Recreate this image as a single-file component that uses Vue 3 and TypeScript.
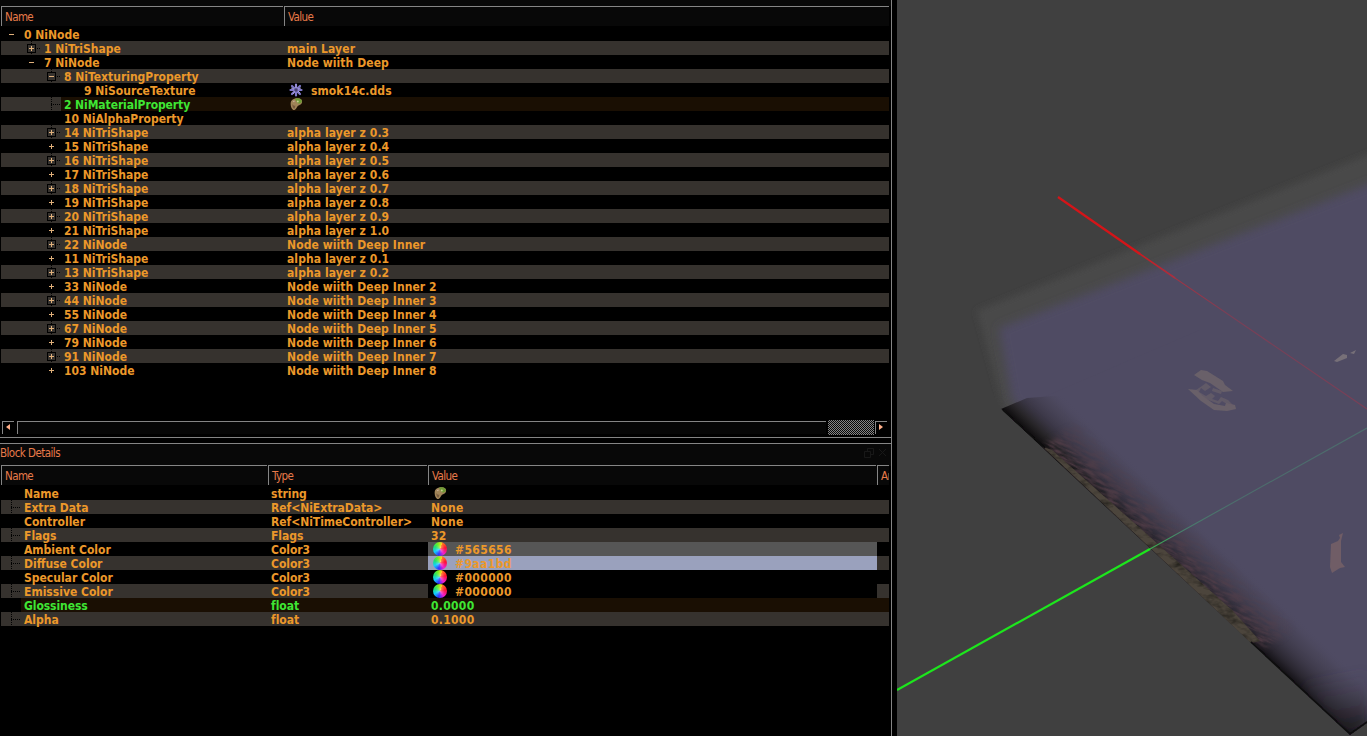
<script setup lang="ts">
interface Block {
  depth: number
  label: string
  value?: string
  toggle?: 'plus' | 'minus'
  icon?: 'flower' | 'palette'
  active?: boolean
}

interface Detail {
  name: string
  type: string
  value: string
  color?: string
  icon?: 'palette'
  active?: boolean
}

const shape = (label: string, value: string): Block => ({ depth: 2, label, value, toggle: 'plus' })

const blocks: Block[] = [
  { depth: 0, label: '0 NiNode', toggle: 'minus' },
  { depth: 1, label: '1 NiTriShape', value: 'main Layer', toggle: 'plus' },
  { depth: 1, label: '7 NiNode', value: 'Node wiith Deep', toggle: 'minus' },
  { depth: 2, label: '8 NiTexturingProperty', toggle: 'minus' },
  { depth: 3, label: '9 NiSourceTexture', value: 'smok14c.dds', icon: 'flower' },
  { depth: 2, label: '2 NiMaterialProperty', icon: 'palette', active: true },
  { depth: 2, label: '10 NiAlphaProperty' },
  shape('14 NiTriShape', 'alpha layer z 0.3'),
  shape('15 NiTriShape', 'alpha layer z 0.4'),
  shape('16 NiTriShape', 'alpha layer z 0.5'),
  shape('17 NiTriShape', 'alpha layer z 0.6'),
  shape('18 NiTriShape', 'alpha layer z 0.7'),
  shape('19 NiTriShape', 'alpha layer z 0.8'),
  shape('20 NiTriShape', 'alpha layer z 0.9'),
  shape('21 NiTriShape', 'alpha layer z 1.0'),
  shape('22 NiNode', 'Node wiith Deep Inner'),
  shape('11 NiTriShape', 'alpha layer z 0.1'),
  shape('13 NiTriShape', 'alpha layer z 0.2'),
  shape('33 NiNode', 'Node wiith Deep Inner 2'),
  shape('44 NiNode', 'Node wiith Deep Inner 3'),
  shape('55 NiNode', 'Node wiith Deep Inner 4'),
  shape('67 NiNode', 'Node wiith Deep Inner 5'),
  shape('79 NiNode', 'Node wiith Deep Inner 6'),
  shape('91 NiNode', 'Node wiith Deep Inner 7'),
  shape('103 NiNode', 'Node wiith Deep Inner 8'),
]

const details: Detail[] = [
  { name: 'Name', type: 'string', value: '', icon: 'palette' },
  { name: 'Extra Data', type: 'Ref<NiExtraData>', value: 'None' },
  { name: 'Controller', type: 'Ref<NiTimeController>', value: 'None' },
  { name: 'Flags', type: 'Flags', value: '32' },
  { name: 'Ambient Color', type: 'Color3', value: '#565656', color: '#565656' },
  { name: 'Diffuse Color', type: 'Color3', value: '#9aa1bd', color: '#9aa1bd' },
  { name: 'Specular Color', type: 'Color3', value: '#000000', color: '#000000' },
  { name: 'Emissive Color', type: 'Color3', value: '#000000', color: '#000000' },
  { name: 'Glossiness', type: 'float', value: '0.0000', active: true },
  { name: 'Alpha', type: 'float', value: '0.1000' },
]
</script>

<template>
  <div class="app">
    <svg class="defs" width="0" height="0">
      <symbol id="flower" viewBox="0 0 14 14">
        <g stroke="#8078c8" stroke-width="2.2" stroke-linecap="round">
          <path d="M7 1.5V12.5M1.5 7H12.5M3 3L11 11M11 3L3 11" />
        </g>
        <g stroke="#b4b0ea" stroke-width=".8"><path d="M7 1V5M2 5L5 6M4 11L6 8M11 10L9 8M12 5L9 6" /></g>
        <circle cx="7" cy="7" r="1.7" fill="#4a4470" />
      </symbol>
      <symbol id="palette" viewBox="0 0 14 14">
        <path d="M1.800 5.200C2.500 2.400 6 1 9 1.200C12 1.300 13.600 3.200 13 5.500C12.400 8 9.700 8 8.600 9.200C7.600 10.400 7.300 12.400 5.500 13C3 13.600 1.100 8.600 1.800 5.200Z" fill="#a08458" />
        <path d="M6 1.800C10 .6 13.200 2 12.800 4.800C12 7.200 9 6.800 7.800 5.300Z" fill="#6f9a35" />
        <circle cx="8.800" cy="4.600" r="1" fill="#c8cc90" />
        <path d="M3.300 7C4.200 8.600 5 9 6.500 8.500L5.600 11.500C4.500 12 3.300 9.700 3.300 7Z" fill="#775a3d" />
        <path d="M4 4.600L5.700 4" stroke="#c5ad93" stroke-width="1.200" />
      </symbol>
    </svg>

    <div class="side">
      <section class="list">
        <div class="head">
          <div class="cell h-block">Name</div>
          <div class="cell h-rest">Value</div>
        </div>
        <div v-for="b in blocks" :key="b.label" class="row" :class="{ active: b.active }">
          <div class="tree" :class="'d' + b.depth">
            <span class="branch" :class="b.toggle || 'leaf'"><i v-if="b.toggle" /></span>
            <span class="label">{{ b.label }}</span>
          </div>
          <div class="value">
            <svg v-if="b.icon" class="icon" width="14" height="14"><use :href="'#' + b.icon" /></svg>
            <span v-if="b.value" :class="{ gap: b.icon }">{{ b.value }}</span>
          </div>
        </div>
      </section>
      <div class="scroll">
        <div class="btn left"><svg width="4" height="6"><path d="M4 0V6L0 3Z" fill="#ffae88" /></svg></div>
        <div class="track" />
        <div class="thumb" />
        <div class="btn right"><svg width="4" height="6"><path d="M0 0V6L4 3Z" fill="#ffae88" /></svg></div>
      </div>
      <div class="splitter" />
      <div class="title">
        <span>Block Details</span>
        <svg width="24" height="10" fill="none" stroke="#181818">
          <path d="M3.5 3V.5H9.500V6.500H7M.5 3.500H6.500V9.500H.5ZM15 1L22 8M22 1L15 8" />
        </svg>
      </div>
      <section class="list details">
        <div class="head">
          <div class="cell h-name">Name</div>
          <div class="cell h-type">Type</div>
          <div class="cell h-value">Value</div>
          <div class="cell h-rest">Ar</div>
        </div>
        <div v-for="d in details" :key="d.name" class="row" :class="{ active: d.active }">
          <div class="tree d0">
            <span class="branch leaf" />
            <span class="label">{{ d.name }}</span>
          </div>
          <div class="type">{{ d.type }}</div>
          <div class="value" :style="{ background: d.color }">
            <svg v-if="d.icon" class="icon" width="14" height="14"><use :href="'#' + d.icon" /></svg>
            <span v-if="d.color" class="wheel" />
            <span :class="{ gap: d.color }">{{ d.value }}</span>
          </div>
        </div>
      </section>
    </div>

    <svg class="scene" width="470" height="736" viewBox="897 0 470 736">
      <defs>
        <filter id="soft" x="-20%" y="-20%" width="140%" height="140%"><feGaussianBlur stdDeviation="3" /></filter>
        <filter id="softer" x="-20%" y="-20%" width="140%" height="140%"><feGaussianBlur stdDeviation="5" /></filter>
        <filter id="fine" x="-20%" y="-20%" width="140%" height="140%"><feGaussianBlur stdDeviation=".6" /></filter>
        <filter id="grain" x="0" y="0" width="100%" height="100%" color-interpolation-filters="sRGB">
          <feTurbulence type="fractalNoise" baseFrequency=".07 .35" numOctaves="3" seed="4" />
          <feColorMatrix values="0 0 0 0 .34  0 0 0 0 .25  0 0 0 0 .29  2.4 0 0 0 -.75" />
        </filter>
        <filter id="rock" x="0" y="0" width="100%" height="100%" color-interpolation-filters="sRGB">
          <feTurbulence type="fractalNoise" baseFrequency=".08 .16" numOctaves="3" seed="9" />
          <feColorMatrix values="0 0 0 0 .15  0 0 0 0 .14  0 0 0 0 .12  2.2 0 0 0 -.95" />
          <feComposite in2="SourceGraphic" operator="in" result="spots" />
          <feMerge><feMergeNode in="SourceGraphic" /><feMergeNode in="spots" /></feMerge>
          <feGaussianBlur stdDeviation=".5" />
        </filter>
        <linearGradient id="shade" gradientUnits="userSpaceOnUse" x1="1175" y1="571" x2="1210" y2="534">
          <stop offset="0" stop-color="#0b090b" stop-opacity=".92" />
          <stop offset=".2" stop-color="#191619" stop-opacity=".68" />
          <stop offset=".45" stop-color="#28242b" stop-opacity=".46" />
          <stop offset=".75" stop-color="#3a3641" stop-opacity=".24" />
          <stop offset="1" stop-color="#4f4b63" stop-opacity="0" />
        </linearGradient>
        <linearGradient id="tip" gradientUnits="userSpaceOnUse" x1="1350" y1="735" x2="1338" y2="672">
          <stop offset="0" stop-color="#151215" stop-opacity=".8" />
          <stop offset=".4" stop-color="#2b2830" stop-opacity=".45" />
          <stop offset="1" stop-color="#4f4b63" stop-opacity="0" />
        </linearGradient>
        <linearGradient id="maskfade" gradientUnits="userSpaceOnUse" x1="1175" y1="571" x2="1205" y2="539">
          <stop offset="0" stop-color="#ddd" /><stop offset=".5" stop-color="#999" /><stop offset="1" stop-color="#000" />
        </linearGradient>
        <mask id="fur" maskUnits="userSpaceOnUse" x="897" y="0" width="470" height="736">
          <path d="M1042 447L1080 420L1300 625L1262 650Z" fill="url(#maskfade)" filter="url(#soft)" />
        </mask>
        <linearGradient id="redfade" gradientUnits="userSpaceOnUse" x1="1130" y1="247" x2="1230" y2="315">
          <stop offset="0" stop-color="#d51418" /><stop offset=".45" stop-color="#a83040" /><stop offset="1" stop-color="#793f56" />
        </linearGradient>
        <linearGradient id="greenfade" gradientUnits="userSpaceOnUse" x1="1150" y1="549" x2="1240" y2="499">
          <stop offset="0" stop-color="#39b050" /><stop offset=".35" stop-color="#487e6c" /><stop offset="1" stop-color="#4c6c6c" />
        </linearGradient>
        <clipPath id="body"><path d="M930 280L1380 90V714L1350 735L1001 409Z" /></clipPath>
      </defs>
      <rect x="897" width="470" height="736" fill="#404040" />
      <g clip-path="url(#body)">
        <path d="M977 311L1400 142V800L1350 735L1004 409Z" fill="#494948" filter="url(#soft)" />
        <path d="M999 328L1400 172V760H1350L1040 425L1012 400Z" fill="#4f4b63" filter="url(#softer)" />
        <path d="M1030 403L1200 330H1367V716L1350 735Z" fill="#4f4b63" />
        <path d="M1001 409L1027 398L1066 395L1400 706V740H1350Z" fill="url(#shade)" />
        <g mask="url(#fur)">
          <rect x="900" y="300" width="600" height="500" filter="url(#grain)" transform="rotate(25 1160 550)" />
        </g>
        <path d="M1300 688L1330 660H1367V725L1350 735Z" fill="url(#tip)" filter="url(#softer)" />
      </g>
      <path d="M1043 447L1052 450L1150 537L1233 611L1260 641L1251 643Z" fill="#4c453c" filter="url(#rock)" />
      <path d="M1003 410L1045 448M1251 642L1350 734L1367 722" stroke="#0c0b0c" stroke-width="1.600" fill="none" filter="url(#fine)" />
      <g fill="#696069" filter="url(#fine)">
        <path d="M1194 375L1201 370L1207 371L1223 381L1225 385L1233 391L1223 392L1210 383L1202 380Z" />
        <path d="M1188 389L1197 390L1203 396L1214 404L1225 406L1226 403L1235 405L1236 409L1227 411L1214 410L1201 401Z" />
        <path d="M1206 383L1211 387L1205 391L1201 388L1199 392L1206 396L1211 393L1215 396L1212 399L1218 401L1221 397L1228 400L1234 406L1230 406L1222 401L1219 404L1206 399L1196 390L1202 386ZM1213 388L1222 391L1221 394L1212 391Z" opacity=".7" />
      </g>
      <path d="M1334 361L1343 354L1347 355V358L1337 362ZM1350 353L1356 350L1354 354Z" fill="#777078" filter="url(#fine)" />
      <path d="M1331 544L1338 541L1340 538L1339 535L1343 533L1342 537L1341 541V562L1345 567L1340 568L1332 573L1330 567Z" fill="#6f5d66" filter="url(#fine)" />
      <g fill="none">
        <path d="M1058 197L1140 254" stroke="#d51418" stroke-width="2.200" />
        <path d="M1138 252.600L1175 278" stroke="url(#redfade)" stroke-width="1.600" />
        <path d="M1174 277.400L1367 409" stroke="url(#redfade)" stroke-width="1.100" />
        <path d="M897 690L1150 549" stroke="#1de61d" stroke-width="2.200" />
        <path d="M1150 549L1367 428" stroke="url(#greenfade)" stroke-width="1.100" />
      </g>
    </svg>
  </div>
</template>

<style>
body {
  background: #000;
  overflow: hidden;
}
</style>

<style scoped>
.app {
  display: flex;
  width: 1367px;
  height: 736px;
  overflow: hidden;
  background: #000;
  font: bold 12px/16px 'DejaVu Sans Condensed', 'DejaVu Sans', sans-serif;
  font-stretch: condensed;
  color: #ec982a;
  white-space: nowrap;
}
.defs {
  position: absolute;
}
.side {
  box-sizing: border-box;
  width: 892px;
  height: 736px;
  margin-right: 5px;
  border-right: 1px solid #858585;
  display: flex;
  flex-direction: column;
  flex-shrink: 0;
}
.scene {
  flex-shrink: 0;
}
.list {
  box-sizing: border-box;
  height: 420px;
  padding: 6px 2px 0 1px;
  background: linear-gradient(#080808 6px, #000 6px);
  overflow: hidden;
  flex-shrink: 0;
}
.head {
  display: flex;
  gap: 1px;
  height: 20px;
  margin-bottom: 1px;
  background: #080808;
  font-weight: normal;
  font-size: 11.5px;
  letter-spacing: -.6px;
  color: #e87b4a;
}
.cell {
  box-sizing: border-box;
  border: solid #858585;
  border-width: 1px 0 0 1px;
  padding: 2px 0 0 3px;
  overflow: hidden;
}
.h-block { width: 282px; }
.h-name { width: 266px; }
.h-type { width: 159px; }
.h-value { width: 448px; }
.h-rest { flex: 1; }
.row {
  display: flex;
  height: 14px;
}
.row:nth-child(odd) {
  background: #36322e;
}
.tree {
  display: flex;
  width: 283px;
}
.d0 { --indent: 3px; }
.d1 { --indent: 23px; }
.d2 { --indent: 43px; }
.d3 { --indent: 63px; }
.branch {
  box-sizing: border-box;
  width: 17px;
  height: 14px;
  margin-left: var(--indent);
  padding: 3px 0 0 3px;
  flex-shrink: 0;
  background:
    repeating-linear-gradient(#000 0 1px, transparent 1px 2px) 7px 0 / 1px 14px no-repeat,
    repeating-linear-gradient(90deg, #000 0 1px, transparent 1px 2px) 7px 7px / 9px 1px no-repeat;
}
.branch i {
  display: block;
  box-sizing: border-box;
  width: 9px;
  height: 9px;
  border: 1px solid #000;
  background:
    linear-gradient(#e0b07a, #e0b07a) center / 5px 1px no-repeat,
    linear-gradient(#e0b07a, #e0b07a) center / 1px 5px no-repeat,
    #36322e;
}
.branch.minus i {
  background: linear-gradient(#e0b07a, #e0b07a) center / 5px 1px no-repeat #36322e;
}
.row:nth-child(even) .branch i {
  background-color: #000;
}
.label {
  flex: 1;
  padding-left: 3px;
}
.value {
  display: flex;
  flex: 1;
  padding-left: 3px;
  letter-spacing: .09px;
}
.icon {
  margin: 0 0 0 2px;
  flex-shrink: 0;
}
.gap {
  margin-left: 8px;
}
.active .label,
.active .type,
.active .value {
  color: #3fe634;
  background: #1a0f03;
}
.active .label {
  letter-spacing: -.08px;
}
.scroll {
  display: flex;
  height: 17px;
  padding: 0 4px 0 2px;
  background: #000;
  flex-shrink: 0;
}
.btn {
  box-sizing: border-box;
  width: 12px;
  height: 13px;
  margin-top: 1px;
  border: solid #858585;
  border-width: 1px 0 0 1px;
  padding: 2px 0 0 3px;
  line-height: 0;
}
.track {
  flex: 1;
  box-sizing: border-box;
  height: 13px;
  margin: 1px 2px 0 3px;
  border: solid #858585;
  border-width: 1px 0 0 1px;
  background: #060606;
}
.thumb {
  width: 46px;
  height: 15px;
  margin-right: 1px;
  background: repeating-conic-gradient(#858585 0 25%, #080808 0 50%) 0 0 / 2px 2px;
}
.splitter {
  box-sizing: border-box;
  height: 7px;
  border: solid #858585;
  border-width: 1px 0;
  background: #000;
  flex-shrink: 0;
}
.title {
  display: flex;
  justify-content: space-between;
  height: 15px;
  padding: 1px 3px 0 0;
  background: #080808;
  font-weight: normal;
  font-size: 11.5px;
  letter-spacing: -.55px;
  color: #e87b4a;
  flex-shrink: 0;
}
.title svg {
  margin-top: 3px;
}
.details {
  flex: 1;
  padding-top: 5px;
}
.details .tree { width: 267px; }
.details .type { width: 157px; padding-left: 3px; letter-spacing: -.04px; }
.details .value { flex: none; width: 446px; letter-spacing: .3px; }
.details .active .value { flex: 1; }
.details .gap { letter-spacing: .4px; }
.wheel {
  width: 14px;
  height: 14px;
  margin-left: 2px;
  border-radius: 50%;
  background:
    radial-gradient(#ffffff66, transparent 50%),
    conic-gradient(from 20deg, #ff8020, #ff1030 16%, #f020d0 34%, #3030ff 48%, #10d0ff 62%, #20e070 76%, #70f020 88%, #ffd020);
}
</style>
